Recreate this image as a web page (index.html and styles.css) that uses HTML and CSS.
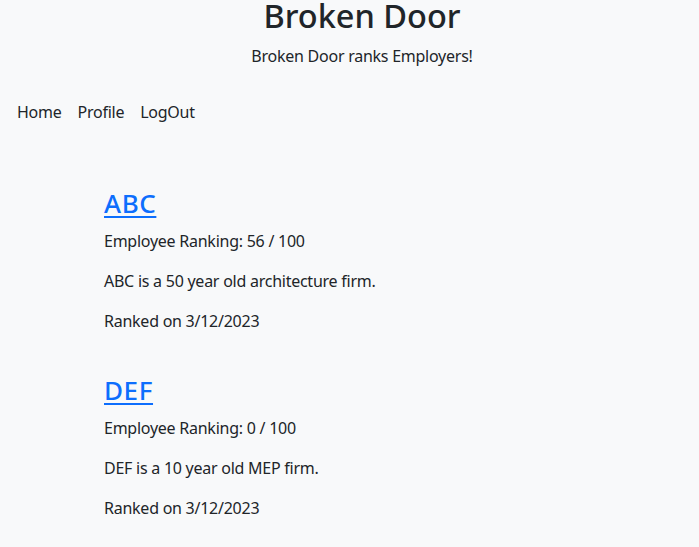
FILE: index.html
```html
<!DOCTYPE html>
<html lang="en">
<head>
<meta charset="utf-8">
<title>Broken Door</title>
<link rel="stylesheet" href="styles.css">
</head>
<body>
<header class="site-header">
  <h1 class="site-title">Broken Door</h1>
  <p class="site-tagline">Broken Door ranks Employers!</p>
</header>
<nav class="site-nav">
  <a class="nav-link" href="#">Home</a>
  <a class="nav-link" href="#">Profile</a>
  <a class="nav-link" href="#">LogOut</a>
</nav>
<main class="companies">
  <section class="company">
    <h4 class="company-name"><a href="#">ABC</a></h4>
    <p>Employee Ranking: 56 / 100</p>
    <p>ABC is a 50 year old architecture firm.</p>
    <p>Ranked on 3/12/2023</p>
  </section>
  <section class="company">
    <h4 class="company-name"><a href="#">DEF</a></h4>
    <p>Employee Ranking: 0 / 100</p>
    <p>DEF is a 10 year old MEP firm.</p>
    <p>Ranked on 3/12/2023</p>
  </section>
</main>
</body>
</html>
```
FILE: styles.css
```css
html, body {
  margin: 0;
  background: #f8f9fa;
}
body {
  font-family: "Noto Sans", "Open Sans", sans-serif;
  font-size: 16px;
  line-height: 1.5;
  letter-spacing: -0.25px;
  color: #212529;
}
.site-header {
  text-align: center;
  padding-left: 25px;
}
.site-title {
  margin: 0;
  font-size: 32.5px;
  font-weight: 500;
  line-height: 31px;
  letter-spacing: 0;
}
.site-tagline {
  margin: 13px 0 0;
}
.site-nav {
  display: flex;
  margin-top: 32px;
  padding-left: 9px;
}
.nav-link {
  padding: 0 8px;
  color: #212529;
  text-decoration: none;
}
.companies {
  display: flex;
  flex-direction: column;
  gap: 42px;
  margin-top: 64px;
  padding-left: 104px;
}
.company-name {
  margin: 0 0 10px;
  font-size: 26px;
  font-weight: 500;
  line-height: 1.2;
  letter-spacing: 0.6px;
}
.company-name a {
  color: #0d6efd;
  text-decoration-thickness: 2px;
  text-underline-offset: 3px;
}
.company p {
  margin: 0 0 16px;
}
.company p:last-child {
  margin-bottom: 0;
}
```
